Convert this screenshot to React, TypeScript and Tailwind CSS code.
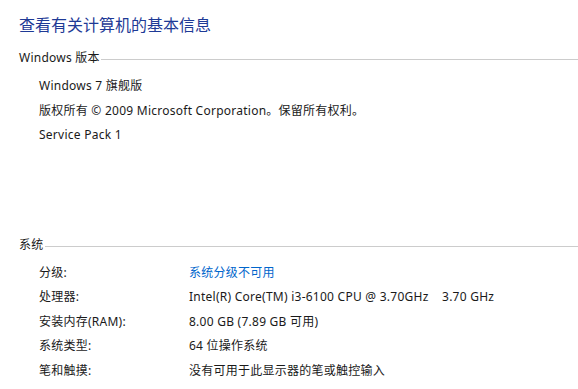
import React from "react";

const font = { fontFamily: '"Noto Sans", "Noto Sans CJK SC", sans-serif' };

function SectionHeader({ title }: { title: string }) {
  return (
    <div className="flex items-center h-[24px]">
      <span className="text-[12px] text-[#1a1a1a] leading-[24px] whitespace-nowrap tracking-[0.25px]">{title}</span>
      <div className="flex-1 h-px bg-[#cccccc] ml-[1px] mt-[3px]" />
    </div>
  );
}

const rows: { label: string; value: string; link?: boolean }[] = [
  { label: "分级:", value: "系统分级不可用", link: true },
  { label: "处理器:", value: "Intel(R) Core(TM) i3-6100 CPU @ 3.70GHz    3.70 GHz" },
  { label: "安装内存(RAM):", value: "8.00 GB (7.89 GB 可用)" },
  { label: "系统类型:", value: "64 位操作系统" },
  { label: "笔和触摸:", value: "没有可用于此显示器的笔或触控输入" },
];

export default function App() {
  return (
    <div className="w-[578px] h-[389px] bg-white overflow-hidden pl-[19px]" style={font}>
      <div className="pt-[12px] text-[16px] leading-[24px] text-[#1e3a96]" style={{ fontFamily: '"Noto Sans CJK SC", sans-serif' }}>
        查看有关计算机的基本信息
      </div>
      <div className="mt-[10px]">
        <SectionHeader title="Windows 版本" />
      </div>
      <div className="pl-[20px] text-[12px] text-[#1a1a1a] leading-[24.5px] mt-[4px] tracking-[0.25px]">
        <div>Windows 7 旗舰版</div>
        <div>版权所有 © 2009 Microsoft Corporation。保留所有权利。</div>
        <div>Service Pack 1</div>
      </div>
      <div className="mt-[85px]">
        <SectionHeader title="系统" />
      </div>
      <div className="pl-[20px] text-[12px] text-[#1a1a1a] mt-[4px] tracking-[0.25px]">
        {rows.map((r) => (
          <div key={r.label} className="flex leading-[24.5px]">
            <div className="w-[150px] shrink-0">{r.label}</div>
            <div className={r.link ? "text-[#0066cc] whitespace-pre" : "whitespace-pre"}>{r.value}</div>
          </div>
        ))}
      </div>
    </div>
  );
}
